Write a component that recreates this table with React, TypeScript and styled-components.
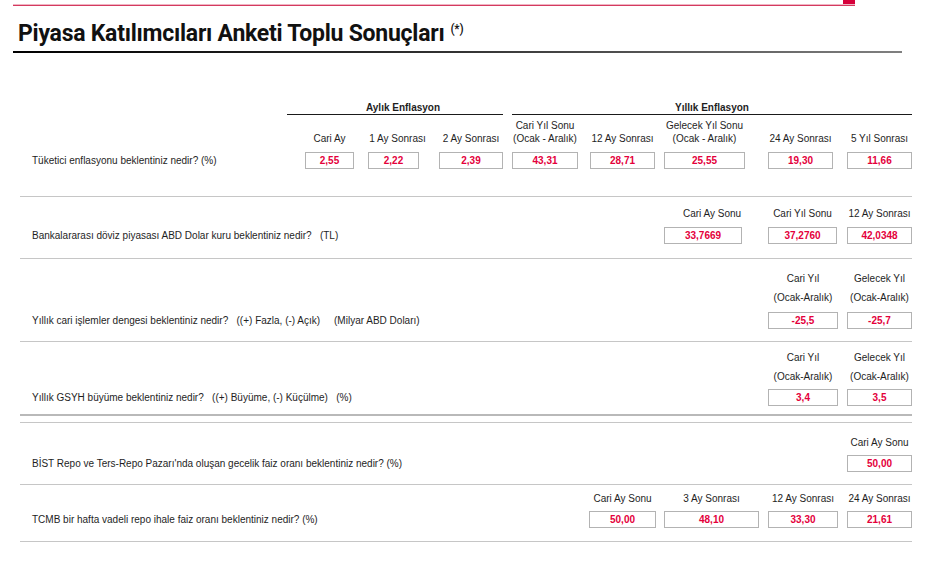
import React from "react";
import styled, { createGlobalStyle } from "styled-components";

const GlobalStyle = createGlobalStyle`
  body {
    margin: 0;
    background: #fff;
    font-family: "Liberation Sans", Arial, sans-serif;
    color: #1e1e1e;
  }
`;

type Col = { x: number; w: number; head: string[]; value: string; shift?: number };
type Section = {
  label: string;
  cols: Col[];
  padTop: number;
  padBottom: number;
  lh: number;
  gap: number;
};

const RIGHT_EDGE = 912;

const inflationCols: Col[] = [
  { x: 305, w: 49, head: ["Cari Ay"], value: "2,55" },
  { x: 368, w: 51, head: ["1 Ay Sonrası"], value: "2,22", shift: 4 },
  { x: 439, w: 64, head: ["2 Ay Sonrası"], value: "2,39" },
  { x: 512, w: 66, head: ["Cari Yıl Sonu", "(Ocak - Aralık)"], value: "43,31" },
  { x: 590, w: 65, head: ["12 Ay Sonrası"], value: "28,71" },
  { x: 664, w: 81, head: ["Gelecek Yıl Sonu", "(Ocak - Aralık)"], value: "25,55" },
  { x: 768, w: 65, head: ["24 Ay Sonrası"], value: "19,30" },
  { x: 847, w: 65, head: ["5 Yıl Sonrası"], value: "11,66" },
];

const sections: Section[] = [
  {
    label: "Bankalararası döviz piyasası ABD Dolar kuru beklentiniz nedir?   (TL)",
    cols: [
      { x: 664, w: 78, head: ["Cari Ay Sonu"], value: "33,7669", shift: 9 },
      { x: 768, w: 69, head: ["Cari Yıl Sonu"], value: "37,2760" },
      { x: 847, w: 65, head: ["12 Ay Sonrası"], value: "42,0348" },
    ],
    padTop: 10,
    padBottom: 14,
    lh: 13,
    gap: 7,
  },
  {
    label: "Yıllık cari işlemler dengesi beklentiniz nedir?   ((+) Fazla, (-) Açık)     (Milyar ABD Doları)",
    cols: [
      { x: 768, w: 70, head: ["Cari Yıl", "(Ocak-Aralık)"], value: "-25,5" },
      { x: 847, w: 65, head: ["Gelecek Yıl", "(Ocak-Aralık)"], value: "-25,7" },
    ],
    padTop: 10,
    padBottom: 12,
    lh: 19,
    gap: 5,
  },
  {
    label: "Yıllık GSYH büyüme beklentiniz nedir?   ((+) Büyüme, (-) Küçülme)   (%)",
    cols: [
      { x: 768, w: 70, head: ["Cari Yıl", "(Ocak-Aralık)"], value: "3,4" },
      { x: 847, w: 65, head: ["Gelecek Yıl", "(Ocak-Aralık)"], value: "3,5" },
    ],
    padTop: 6,
    padBottom: 8,
    lh: 19,
    gap: 3,
  },
];

const rateSections: Section[] = [
  {
    label: "BİST Repo ve Ters-Repo Pazarı'nda oluşan gecelik faiz oranı beklentiniz nedir? (%)",
    cols: [{ x: 847, w: 65, head: ["Cari Ay Sonu"], value: "50,00" }],
    padTop: 13,
    padBottom: 12,
    lh: 13,
    gap: 6,
  },
  {
    label: "TCMB bir hafta vadeli repo ihale faiz oranı beklentiniz nedir? (%)",
    cols: [
      { x: 589, w: 67, head: ["Cari Ay Sonu"], value: "50,00" },
      { x: 664, w: 95, head: ["3 Ay Sonrası"], value: "48,10" },
      { x: 768, w: 70, head: ["12 Ay Sonrası"], value: "33,30" },
      { x: 847, w: 65, head: ["24 Ay Sonrası"], value: "21,61" },
    ],
    padTop: 7,
    padBottom: 13,
    lh: 13,
    gap: 6,
  },
];

const Page = styled.div`
  width: 935px;
`;

const TopBar = styled.div`
  margin-left: 13px;
  width: 842px;
  display: flex;
  flex-direction: column;
`;

const RedTab = styled.div`
  align-self: flex-end;
  width: 12px;
  height: 4px;
  background: #d6003a;
`;

const RedLine = styled.div`
  height: 2px;
  background: linear-gradient(#f0b4c3 50%, #d43a5f 50%);
`;

const Title = styled.h1`
  margin: 15px 0 0 18px;
  font-family: Roboto, "Open Sans", sans-serif;
  font-size: 23px;
  line-height: 26px;
  font-weight: 700;
  color: #111;
  letter-spacing: -0.25px;

  sup {
    font-size: 12px;
    margin-left: 6px;
    vertical-align: 8px;
    line-height: 0;
    font-weight: 500;
  }
`;

const TitleRule = styled.div`
  margin: 4px 0 0 13px;
  width: 889px;
  height: 2px;
  background: linear-gradient(to right, #000 0%, #333 50%, #808080 100%);
`;

const Survey = styled.div`
  margin: 49px 0 0 20px;
  width: ${RIGHT_EDGE - 20}px;
  font-size: 10px;
`;

const GroupRow = styled.div`
  display: flex;
`;

const Spacer = styled.div`
  flex: 1;
`;

const Group = styled.div<{ $width: number; $gap: number; $shift: number }>`
  width: ${(p) => p.$width}px;
  margin-left: ${(p) => p.$gap}px;
  padding-left: ${(p) => p.$shift}px;
  box-sizing: border-box;
  text-align: center;
  font-weight: 700;
  line-height: 12px;
  border-bottom: 1px solid #1a1a1a;
`;

const Block = styled.div<{ $top: number; $bottom: number }>`
  padding: ${(p) => p.$top}px 0 ${(p) => p.$bottom}px;
`;

const Row = styled.div`
  display: flex;
  align-items: flex-end;
`;

const Label = styled.div`
  flex: 1;
  padding-left: 12px;
  height: 17px;
  line-height: 17px;
  white-space: pre;
  color: #1e1e1e;
`;

const Column = styled.div<{ $width: number; $gap: number; $boxGap: number }>`
  width: ${(p) => p.$width}px;
  margin-left: ${(p) => p.$gap}px;
  display: flex;
  flex-direction: column;
  gap: ${(p) => p.$boxGap}px;
`;

const Head = styled.div<{ $shift: number }>`
  position: relative;
  left: ${(p) => p.$shift}px;
`;

const HeadLine = styled.div<{ $lh: number }>`
  display: flex;
  justify-content: center;
  white-space: nowrap;
  line-height: ${(p) => p.$lh}px;
  color: #1e1e1e;
`;

const ValueBox = styled.div`
  height: 17px;
  box-sizing: border-box;
  border: 1px solid #b3b3b3;
  background: #fff;
  text-align: center;
  line-height: 15px;
  font-weight: 700;
  color: #e4003b;
`;

const Rule = styled.div<{ $thick?: boolean }>`
  height: ${(p) => (p.$thick ? 2 : 1)}px;
  background: ${(p) => (p.$thick ? "#b9b9b9" : "#c6c6c6")};
`;

const Gap = styled.div<{ $h: number }>`
  height: ${(p) => p.$h}px;
`;

const Columns = ({ cols, lh, gap }: { cols: Col[]; lh: number; gap: number }) => (
  <>
    {cols.map((c, i) => {
      const prevEnd = i === 0 ? c.x : cols[i - 1].x + cols[i - 1].w;
      return (
        <Column key={i} $width={c.w} $gap={c.x - prevEnd} $boxGap={gap}>
          <Head $shift={c.shift ?? 0}>
            {c.head.map((h) => (
              <HeadLine key={h} $lh={lh}>
                {h}
              </HeadLine>
            ))}
          </Head>
          <ValueBox>{c.value}</ValueBox>
        </Column>
      );
    })}
  </>
);

const SurveyBlock = ({ s }: { s: Section }) => (
  <Block $top={s.padTop} $bottom={s.padBottom}>
    <Row>
      <Label>{s.label}</Label>
      <Columns cols={s.cols} lh={s.lh} gap={s.gap} />
    </Row>
  </Block>
);

const App = () => {
  return (
    <Page>
      <GlobalStyle />
      <TopBar>
        <RedTab />
        <RedLine />
      </TopBar>
      <Title>
        Piyasa Katılımcıları Anketi Toplu Sonuçları<sup>(*)</sup>
      </Title>
      <TitleRule />

      <Survey>
        <GroupRow>
          <Spacer />
          <Group $width={216} $gap={0} $shift={16}>
            Aylık Enflasyon
          </Group>
          <Group $width={400} $gap={9} $shift={0}>
            Yıllık Enflasyon
          </Group>
        </GroupRow>
        <Block $top={4} $bottom={27}>
          <Row>
            <Label>Tüketici enflasyonu beklentiniz nedir? (%)</Label>
            <Columns cols={inflationCols} lh={13} gap={7} />
          </Row>
        </Block>
        <Rule />

        {sections.map((s, i) => (
          <React.Fragment key={s.label}>
            <SurveyBlock s={s} />
            <Rule $thick={i === sections.length - 1} />
          </React.Fragment>
        ))}
        <Gap $h={6} />
        <Rule />

        {rateSections.map((s) => (
          <React.Fragment key={s.label}>
            <SurveyBlock s={s} />
            <Rule />
          </React.Fragment>
        ))}
      </Survey>
    </Page>
  );
};

export default App;
